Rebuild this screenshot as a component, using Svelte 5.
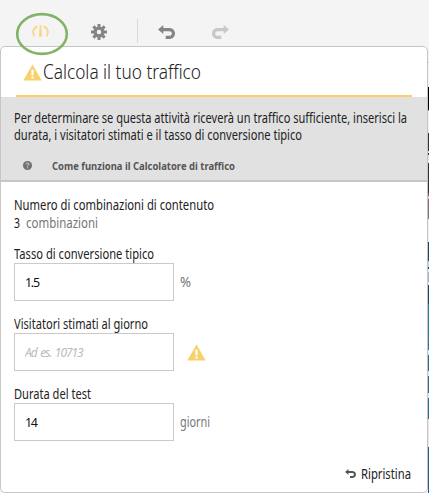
<script>
  let rate = $state('1.5');
  let visitors = $state('');
  let duration = $state('14');

  // Condenses a line of text horizontally so that it takes up the given width.
  function fit(node, width) {
    const natural = node.getBoundingClientRect().width;
    node.style.width = `${width}px`;
    node.style.transform = `scaleX(${width / natural})`;
  }
</script>

{#snippet warning()}
  <svg class="warning" width="19" height="17" viewBox="0 0 19 17">
    <path d="M9.5 .5 18.7 16.5H.3Z" fill="#f9d16b" />
    <path d="M8.4 5.7h2.2v5.6H8.4zM8.4 12.5h2.2v2.1H8.4z" fill="#fff" />
  </svg>
{/snippet}

{#snippet arrow(w, h)}
  <svg width={w} height={h} viewBox="0 0 17 14">
    <path d="M0 4.5 5.3 0v3H11c3.5 0 6 2.2 6 5.5S14.5 14 11 14H7.7v-3.2H11c1.8 0 2.8-.8 2.8-2.3S12.800 6.200 11 6.200H5.300V9Z" fill="currentColor" />
  </svg>
{/snippet}

<div class="screen">
  <header class="toolbar">
    <svg class="gauge" width="17" height="13" viewBox="0 0 17 13" fill="none" stroke="#f9d587" stroke-width="1.800">
      <path d="M2.500 11.200C-.2 7 1.200 3 5.400 1.300M11.600 1.300c4.200 1.700 5.600 5.700 2.900 9.900" />
      <path d="M7.800 0h1.400l.8 10.500a1.500 1.500 0 0 1-3 0Z" fill="#f9d587" stroke="none" />
    </svg>
    <svg class="gear" width="16" height="16" viewBox="-8 -8 16 16" fill="#858585">
      {#each [0, 45, 90, 135] as angle}
        <path d="M-1.500-8h3v4h-3zM-1.500 4h3v4h-3z" transform="rotate({angle})" />
      {/each}
      <circle r="3.900" fill="none" stroke="#858585" stroke-width="3.400" />
    </svg>
    <i class="divider"></i>
    <span class="undo">{@render arrow(17, 14)}</span>
    <span class="redo">{@render arrow(17, 14)}</span>
  </header>

  <div class="body">
    <main class="panel">
      <div class="title">
        {@render warning()}
        <h1><span use:fit={158}>Calcola il tuo traffico</span></h1>
      </div>
      <section class="intro">
        <p><span use:fit={393}>Per determinare se questa attività riceverà un traffico sufficiente, inserisci la</span></p>
        <p><span use:fit={288}>durata, i visitatori stimati e il tasso di conversione tipico</span></p>
        <div class="help">
          <svg width="9" height="9" viewBox="0 0 9 9">
            <circle cx="4.500" cy="4.500" r="4.500" fill="#707070" />
            <path d="M3 3.400C3.100 1.500 6 1.700 5.900 3.400 5.800 4.300 4.500 4.200 4.500 5.500M4.500 6.400v1" fill="none" stroke="#e1e1e1" />
          </svg>
          <b><span use:fit={183}>Come funziona il Calcolatore di traffico</span></b>
        </div>
      </section>
      <form>
        <div class="label"><span use:fit={200}>Numero di combinazioni di contenuto</span></div>
        <div class="count"><span use:fit={6}>3</span><span class="unit" use:fit={72}>combinazioni</span></div>
        <div class="label rate"><span use:fit={140}>Tasso di conversione tipico</span></div>
        <div class="field">
          <input aria-label="Tasso di conversione tipico" bind:value={rate} />
          <span class="unit" use:fit={11}>%</span>
        </div>
        <div class="label"><span use:fit={134}>Visitatori stimati al giorno</span></div>
        <div class="field">
          <input aria-label="Visitatori stimati al giorno" placeholder="Ad es. 10713" bind:value={visitors} />
          {@render warning()}
        </div>
        <div class="label"><span use:fit={77}>Durata del test</span></div>
        <div class="field">
          <input aria-label="Durata del test" bind:value={duration} />
          <span class="unit" use:fit={30}>giorni</span>
        </div>
      </form>
      <footer>{@render arrow(11, 9)}<span use:fit={50}>Ripristina</span></footer>
    </main>
    <aside class="page-edge"></aside>
  </div>
  <svg class="highlight" width="54" height="44" viewBox="0 0 54 44">
    <ellipse cx="27" cy="22" rx="24.800" ry="19.900" fill="none" stroke="#82b366" stroke-width="2.600" />
  </svg>
</div>

<style>
  .screen {
    position: relative;
    width: 429px;
    height: 493px;
    overflow: hidden;
    box-sizing: border-box;
    background: #f4f4f4;
    color: #222;
    font: 13.500px/17px "Noto Sans", "Open Sans", sans-serif;
  }
  span { display: inline-block; transform-origin: 0 50%; white-space: nowrap; }
  svg { display: block; flex: none; }
  .toolbar { display: flex; height: 46px; box-sizing: border-box; padding: 19px 0 0 32px; }
  .gauge { margin-top: 6px; }
  .gear { margin: 5px 0 0 42px; }
  .divider { width: 1px; height: 24px; margin-left: 30px; background: #d9d9d9; }
  .undo { margin: 6px 0 0 20px; color: #858585; }
  .redo { margin: 6px 0 0 37px; color: #c8c8c8; }
  .redo svg { transform: scaleX(-1); }
  .body { display: flex; height: 447px; }
  .panel {
    width: 428px;
    box-sizing: border-box;
    display: flex;
    flex-direction: column;
    border: 1px solid #c6c6c6;
    border-radius: 5px;
    background: #fff;
    overflow: hidden;
  }
  .title {
    display: flex;
    height: 50px;
    box-sizing: border-box;
    margin: 0 15px;
    padding: 17px 0 0 7px;
    border-bottom: 2px solid #fbd066;
  }
  h1 { margin: -5px 0 0 1px; font: 300 19.500px/26px "Noto Sans", "Open Sans", sans-serif; }
  .intro {
    height: 85px;
    box-sizing: border-box;
    padding: 13px 0 0 13px;
    background: #e1e1e1;
    border-bottom: 2px solid #c6c6c6;
  }
  p { margin: 0; height: 17px; }
  .help { display: flex; align-items: center; gap: 20px; height: 17px; margin: 13px 0 0 9px; color: #555; font-size: 11px; }
  form { padding: 15px 13px 0; }
  .label { height: 17px; }
  .count { display: flex; gap: 6px; height: 17px; margin-top: 1px; }
  .rate { margin-top: 14px; }
  .unit { color: #777; }
  .field { display: flex; align-items: center; height: 38px; margin: 0 0 15px; }
  .field .unit { margin-left: 6px; }
  .field .warning { margin-left: 13px; }
  input {
    width: 160px;
    height: 38px;
    box-sizing: border-box;
    padding: 0 10px;
    border: 1px solid #cacaca;
    border-radius: 0;
    outline: 0;
    color: #111;
    background: #fff;
    font: 12.500px "Noto Sans", "Open Sans", sans-serif;
    letter-spacing: -1.300px;
  }
  input::placeholder { color: #bbb; font-size: 12px; font-style: italic; letter-spacing: -1.050px; word-spacing: 1.500px; opacity: 1; }
  footer { display: flex; justify-content: flex-end; align-items: center; gap: 5px; margin: auto 16px 9px 0; }
  footer svg { color: #555; margin-bottom: 3px; }
  .page-edge {
    width: 1px;
    background: linear-gradient(
      #f4f4f4 0 16px, #c6c6c6 16px 17px, #f4f4f4 17px 41px, #000 41px 64px, #aaa 64px 65px,
      #f0f0f0 65px 87px, #333 87px 105px, #eee 105px 107px, #333 107px 109px, #e5dfc5 109px 114px,
      #eee 114px 117px, #333 117px 147px, #a74c57 147px 150px, #ccc 150px 153px, #bd5062 153px 158px,
      #777 158px 173px, #eee 173px 196px, #164570 196px 215px, #cbd0dc 215px 221px, #164570 221px 223px,
      #eee 223px 226px, #aab3c5 226px 236px, #eee 236px 239px, #164570 239px 258px, #2a77aa 258px 304px,
      #e3e8ec 304px 309px, #246a9d 309px 325px, #e3e8ec 325px 330px, #246a9d 330px 347px,
      #e3e8ec 347px 352px, #246a9d 352px 373px, #e7e7e7 373px 401px, #205d96 401px
    );
  }
  .highlight { position: absolute; left: 15px; top: 12px; }
</style>
